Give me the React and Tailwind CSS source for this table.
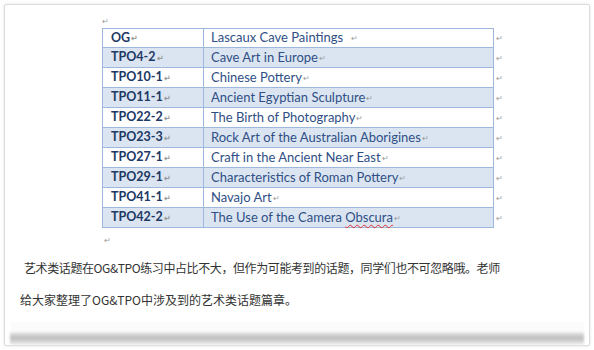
import React from 'react';

const rows = [
  { code: 'OG', title: 'Lascaux Cave Paintings ', shaded: false },
  { code: 'TPO4-2', title: 'Cave Art in Europe', shaded: true },
  { code: 'TPO10-1', title: 'Chinese Pottery', shaded: false },
  { code: 'TPO11-1', title: 'Ancient Egyptian Sculpture', shaded: true },
  { code: 'TPO22-2', title: 'The Birth of Photography', shaded: false },
  { code: 'TPO23-3', title: 'Rock Art of the Australian Aborigines', shaded: true },
  { code: 'TPO27-1', title: 'Craft in the Ancient Near East', shaded: false },
  { code: 'TPO29-1', title: 'Characteristics of Roman Pottery', shaded: true },
  { code: 'TPO41-1', title: 'Navajo Art', shaded: false },
  { code: 'TPO42-2', title: 'The Use of the Camera Obscura', shaded: true, squiggle: 'Obscura' },
];

// Word paragraph mark
const Mark = ({ className = '' }) => (
  <span className={`text-[8px] leading-none text-[#9a9a9a] ${className}`}>↵</span>
);

export default function App() {
  return (
    <div className="w-[594px] h-[350px] bg-white p-[4px]" style={{ fontFamily: 'Lato, "Open Sans", sans-serif' }}>
      <div className="h-full flex flex-col border border-[#dcdcdc] rounded-[2px] shadow-[0_0_3px_rgba(0,0,0,0.12)] bg-white">
        <div className="h-[23px] pl-[97px] pt-[12px] flex items-start leading-none">
          <Mark />
        </div>

        {/* Table */}
        <div className="flex flex-col pl-[97px]">
          {rows.map((r, i) => (
            <div key={r.code} className="flex items-stretch h-[20px]">
              <div
                className={`w-[392px] flex border-l border-r border-b border-[#9db8dc] ${i === 0 ? 'border-t' : ''} ${
                  r.shaded ? 'bg-[#dbe5f1]' : 'bg-white'
                }`}
              >
                <div className="w-[101px] shrink-0 border-r border-[#9db8dc] pl-[8px] flex items-center text-[12.5px] font-bold text-[#203864]">
                  {r.code}
                  <Mark className="ml-[1px]" />
                </div>
                <div className="flex-1 pl-[7px] flex items-center text-[13px] text-[#2f4f86] whitespace-pre">
                  {r.squiggle ? (
                    <>
                      {r.title.replace(r.squiggle, '')}
                      <span className="underline decoration-wavy decoration-[#e03030] decoration-[1px] underline-offset-2">
                        {r.squiggle}
                      </span>
                    </>
                  ) : (
                    r.title
                  )}
                  <Mark className={i === 0 ? 'ml-[4px]' : 'ml-[1px]'} />
                </div>
              </div>
              <div className="pl-[2px] flex items-center">
                <Mark />
              </div>
            </div>
          ))}
        </div>

        <div className="h-[14px] pl-[99px] pt-[8px] flex items-start leading-none">
          <Mark />
        </div>

        {/* Paragraph */}
        <div
          className="pl-[15px] pt-[10px] text-[12px] leading-[32px] text-[#333333]"
          style={{ fontFamily: '"Noto Sans CJK SC", "Noto Sans", sans-serif' }}
        >
          <p className="pl-[4px] tracking-[-0.4px]">艺术类话题在OG&amp;TPO练习中占比不大，但作为可能考到的话题，同学们也不可忽略哦。老师</p>
          <p>给大家整理了OG&amp;TPO中涉及到的艺术类话题篇章。</p>
        </div>

        <div className="flex-1" />

        {/* soft image shadow */}
        <div className="mx-[5px] h-[10px] bg-[#fbfbfb]" />
        <div className="mx-[5px] h-[13px] bg-[linear-gradient(to_bottom,#ebebeb,#bdbdbd_45%,#dcdcdc_80%,#f6f6f6)] blur-[1px]" />
      </div>
    </div>
  );
}
